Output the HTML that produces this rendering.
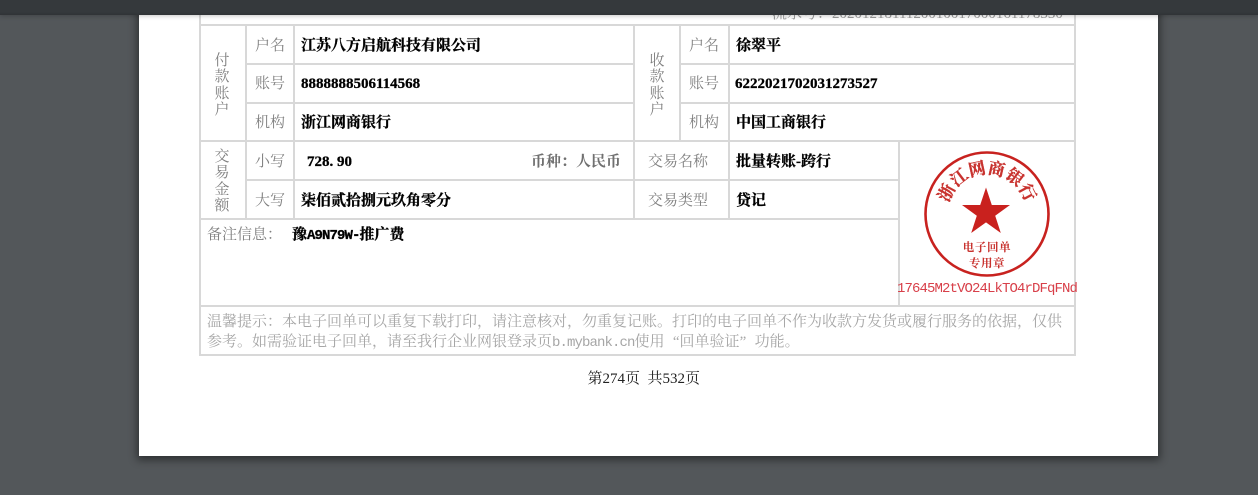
<!DOCTYPE html>
<html lang="zh"><head><meta charset="utf-8"><style>
html,body{margin:0;padding:0;width:1258px;height:495px;overflow:hidden;background:#53575a}
body{position:relative;font-family:"Liberation Serif","Noto Serif CJK SC",serif;font-size:15px}
#page{position:absolute;left:139px;top:0;width:1019px;height:456px;background:#fff;box-shadow:0 2px 8px 2px rgba(0,0,0,.45)}
#bar{position:absolute;left:0;top:0;width:1258px;height:15px;background:linear-gradient(#35393c 80%,#303336);box-shadow:0 1px 5px rgba(0,0,0,.22);z-index:5}
.h,.v{position:absolute;background:#d8d8d8}
.t{position:absolute;white-space:nowrap;line-height:20px}
.l{color:#808080}
.b{color:#000;font-weight:bold;-webkit-text-stroke:.3px #000}
.m{font-family:"Liberation Mono",monospace;font-size:14px;letter-spacing:-.9px}
.vt{position:absolute;width:16px;text-align:center;color:#808080;line-height:16.4px;white-space:normal}
.tip{color:#a6a6a6}
</style></head><body>
<div id="page"></div>
<div id="bar"></div>

<div class="v" style="left:199px;top:0;width:2px;height:356px"></div>
<div class="v" style="left:1074px;top:0;width:2px;height:356px"></div>
<div class="h" style="left:199px;top:24px;width:877px;height:2px"></div>
<div class="h" style="left:245px;top:63px;width:389px;height:2px"></div>
<div class="h" style="left:680px;top:63px;width:395px;height:2px"></div>
<div class="h" style="left:245px;top:102px;width:389px;height:2px"></div>
<div class="h" style="left:680px;top:102px;width:395px;height:2px"></div>
<div class="h" style="left:199px;top:140px;width:877px;height:2px"></div>
<div class="h" style="left:245px;top:179px;width:654px;height:2px"></div>
<div class="h" style="left:199px;top:218px;width:700px;height:2px"></div>
<div class="h" style="left:199px;top:305px;width:877px;height:2px"></div>
<div class="h" style="left:199px;top:354px;width:877px;height:2px"></div>

<div class="v" style="left:245px;top:25px;width:2px;height:194px"></div>
<div class="v" style="left:293px;top:25px;width:2px;height:194px"></div>
<div class="v" style="left:633px;top:25px;width:2px;height:194px"></div>
<div class="v" style="left:679px;top:25px;width:2px;height:116px"></div>
<div class="v" style="left:728px;top:25px;width:2px;height:194px"></div>
<div class="v" style="left:898px;top:141px;width:2px;height:165px"></div>

<div class="t" style="left:772px;top:4px;color:#999">流水号：2020121811120010017000161178330</div>

<div class="vt" style="left:214px;top:53px">付款账户</div>
<div class="t l" style="left:255px;top:36px">户名</div>
<div class="t b" style="left:301px;top:36px">江苏八方启航科技有限公司</div>
<div class="t l" style="left:255px;top:74px">账号</div>
<div class="t b" style="left:301px;top:74px">8888888506114568</div>
<div class="t l" style="left:255px;top:113px">机构</div>
<div class="t b" style="left:301px;top:113px">浙江网商银行</div>

<div class="vt" style="left:649px;top:53px">收款账户</div>
<div class="t l" style="left:689px;top:36px">户名</div>
<div class="t b" style="left:736px;top:36px">徐翠平</div>
<div class="t l" style="left:689px;top:74px">账号</div>
<div class="t b" style="left:735px;top:74px">6222021702031273527</div>
<div class="t l" style="left:689px;top:113px">机构</div>
<div class="t b" style="left:736px;top:113px">中国工商银行</div>

<div class="vt" style="left:214px;top:149px">交易金额</div>
<div class="t l" style="left:255px;top:152px">小写</div>
<div class="t b" style="left:307px;top:152px">728<span style="letter-spacing:3.75px">.</span>90</div>
<div class="t" style="left:531px;top:152px;color:#707070;font-weight:bold">币种：人民币</div>
<div class="t l" style="left:255px;top:191px">大写</div>
<div class="t b" style="left:301px;top:191px">柒佰贰拾捌元玖角零分</div>
<div class="t l" style="left:648px;top:152px">交易名称</div>
<div class="t b" style="left:736px;top:152px">批量转账-跨行</div>
<div class="t l" style="left:648px;top:191px">交易类型</div>
<div class="t b" style="left:736px;top:191px">贷记</div>
<div class="t l" style="left:207px;top:225px">备注信息：</div>
<div class="t b" style="left:292px;top:225px">豫<span class="m">A9N79W-</span>推广费</div>

<svg style="position:absolute;left:900px;top:142px" width="175" height="164" viewBox="900 142 175 164">
<circle cx="987" cy="214" r="61.5" fill="none" stroke="#c8221f" stroke-width="2.6"/>
<polygon fill="#c9211e" points="986,187.5 991.8,205 1010,205 995.2,215.8 1000.8,233 986,222.4 971.2,233 976.8,215.8 962,205 980.2,205" />
<defs><path id="arc" d="M947 214 A40 40 0 0 1 1027 214" fill="none"/></defs>
<text font-family="'Liberation Serif','Noto Serif CJK SC',serif" font-weight="bold" font-size="17" fill="#c8322e" stroke="#c8322e" stroke-width=".3" letter-spacing=".3"><textPath href="#arc" startOffset="50%" text-anchor="middle">浙江网商银行</textPath></text>
<text x="987" y="251" text-anchor="middle" font-family="'Liberation Serif','Noto Serif CJK SC',serif" font-weight="bold" font-size="11.5" fill="#c8322e" letter-spacing=".6">电子回单</text>
<text x="987" y="267" text-anchor="middle" font-family="'Liberation Serif','Noto Serif CJK SC',serif" font-weight="bold" font-size="11.5" fill="#c8322e" letter-spacing=".6">专用章</text>
</svg>
<div class="t m" style="left:897px;top:279px;color:#d8404a">17645M2tVO24LkTO4rDFqFNd</div>

<div class="t tip" style="left:207px;top:312px">温馨提示：本电子回单可以重复下载打印，请注意核对，勿重复记账。打印的电子回单不作为收款方发货或履行服务的依据，仅供</div>
<div class="t tip" style="left:207px;top:332px">参考。如需验证电子回单，请至我行企业网银登录页<span class="m">b.mybank.cn</span>使用<span style="display:inline-block;width:15px;text-align:right">“</span>回单验证<span style="display:inline-block;width:15px;text-align:left">”</span>功能。</div>

<div class="t" style="left:587.5px;top:369px;color:#222">第274页 &nbsp;共532页</div>
</body></html>
